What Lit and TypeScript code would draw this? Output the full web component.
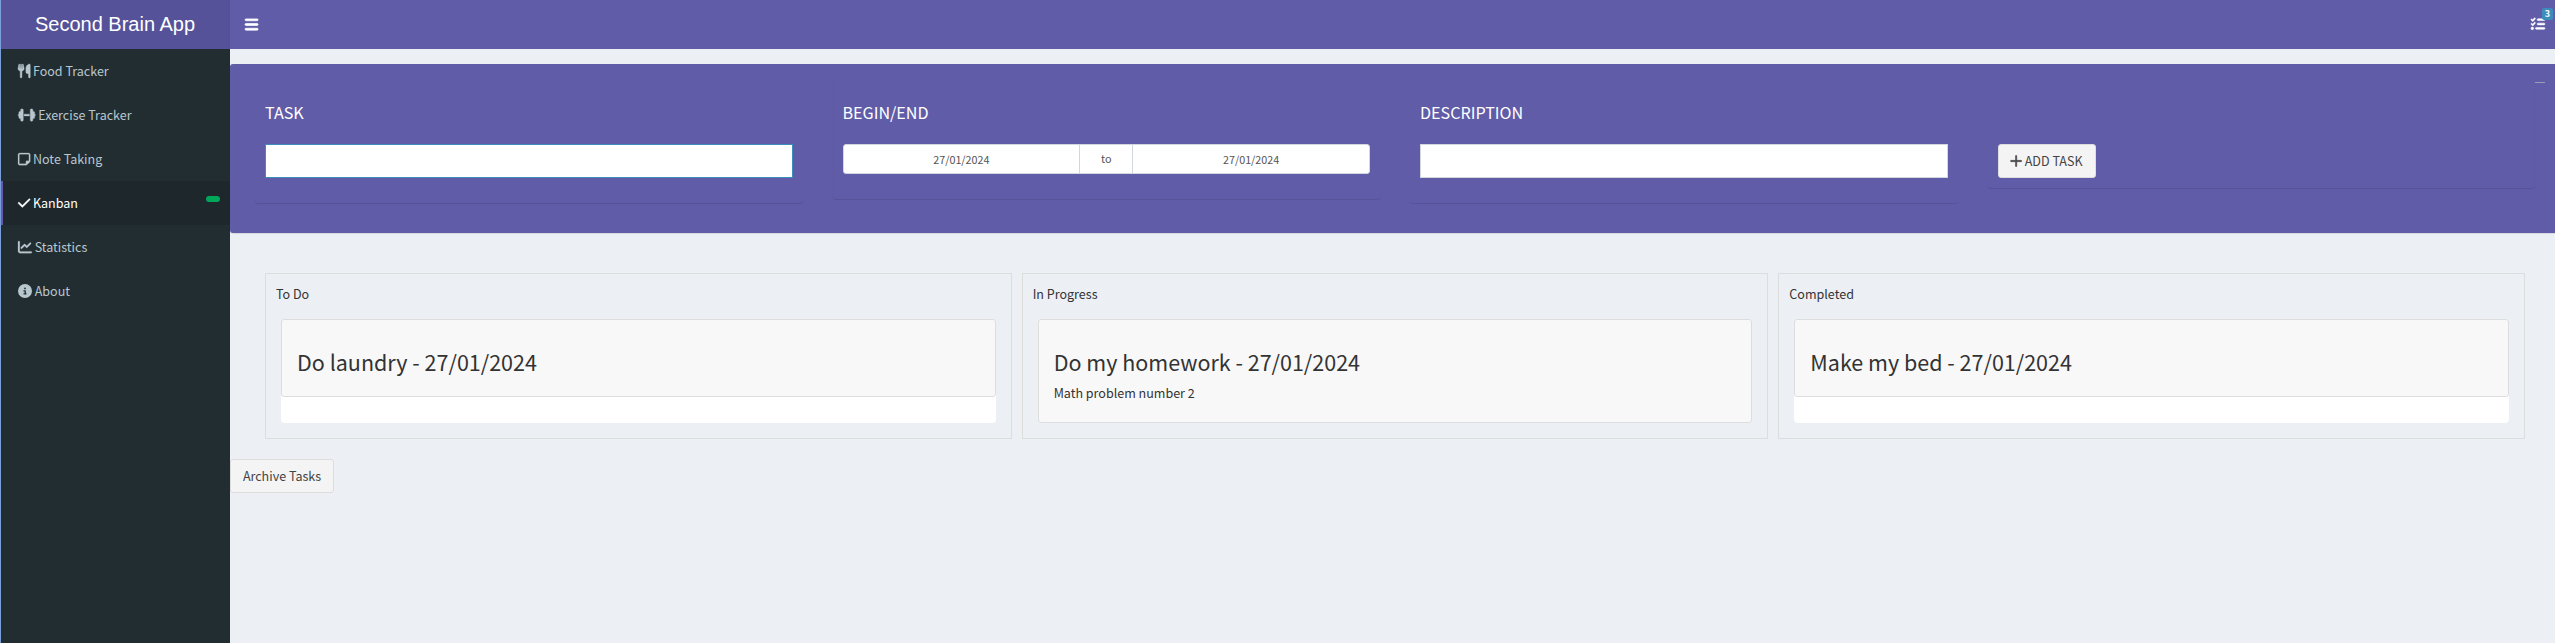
import { LitElement, html, css, svg } from "lit";
import { customElement, property } from "lit/decorators.js";

type Icon = { w: number; d: string; stroke?: number };

const ICONS: Record<string, Icon> = {
  utensils: { w: 448, stroke: 14, d: "M416 0C400 0 288 32 288 176V288c0 35.3 28.7 64 64 64h32V480c0 17.7 14.3 32 32 32s32-14.3 32-32V32c0-17.7-14.3-32-32-32zM64 16C64 7.8 57.9 1 49.7 .1S34.2 4.6 32.4 12.5L2.1 148.8C.7 155.1 0 161.5 0 167.9c0 45.9 35.1 83.6 80 87.7V480c0 17.7 14.3 32 32 32s32-14.3 32-32V255.6c44.9-4.1 80-41.8 80-87.7c0-6.4-.7-12.8-2.1-19.1L191.6 12.5c-1.8-8-9.3-13.3-17.4-12.4S160 7.8 160 16V150.2c0 5.4-4.4 9.8-9.8 9.8c-5.1 0-9.3-3.9-9.8-9L127.9 14.6C127.2 6.3 120.3 0 112 0s-15.2 6.3-15.9 14.6L83.7 151c-.5 5.1-4.7 9-9.8 9c-5.4 0-9.8-4.4-9.8-9.8V16z" },
  dumbbell: { w: 640, stroke: 14, d: "M96 64c0-17.7 14.3-32 32-32h32c17.7 0 32 14.3 32 32V448c0 17.7-14.3 32-32 32H128c-17.7 0-32-14.3-32-32V384H64c-17.7 0-32-14.3-32-32V288c-17.7 0-32-14.3-32-32s14.3-32 32-32V160c0-17.7 14.3-32 32-32H96V64zm448 0v64h32c17.7 0 32 14.3 32 32v64c17.7 0 32 14.3 32 32s-14.3 32-32 32v64c0 17.7-14.3 32-32 32H544v64c0 17.7-14.3 32-32 32H480c-17.7 0-32-14.3-32-32V64c0-17.7 14.3-32 32-32h32c17.7 0 32 14.3 32 32zM416 224v64H224V224H416z" },
  note: { w: 448, stroke: 8, d: "M64 80c-8.8 0-16 7.2-16 16V416c0 8.8 7.2 16 16 16H288V352c0-17.7 14.3-32 32-32h80V96c0-8.8-7.2-16-16-16H64zM288 480H64c-35.3 0-64-28.7-64-64V96C0 60.7 28.7 32 64 32H384c35.3 0 64 28.7 64 64V325.5c0 17-6.7 33.3-18.7 45.3l-90.5 90.5c-12 12-28.3 18.7-45.3 18.7H288z" },
  check: { w: 448, stroke: 10, d: "M438.6 105.4c12.5 12.5 12.5 32.8 0 45.3l-256 256c-12.5 12.5-32.8 12.5-45.3 0l-128-128c-12.5-12.5-12.5-32.8 0-45.3s32.8-12.5 45.3 0L160 338.7 393.4 105.4c12.5-12.5 32.8-12.5 45.3 0z" },
  chart: { w: 512, stroke: 8, d: "M64 64c0-17.7-14.3-32-32-32S0 46.3 0 64V400c0 44.2 35.8 80 80 80H480c17.7 0 32-14.3 32-32s-14.3-32-32-32H80c-8.8 0-16-7.2-16-16V64zm406.6 86.6c12.5-12.5 12.5-32.8 0-45.3s-32.8-12.5-45.3 0L320 210.7l-57.4-57.4c-12.5-12.5-32.8-12.5-45.3 0l-112 112c-12.5 12.5-12.5 32.8 0 45.3s32.8 12.5 45.3 0L240 221.3l57.4 57.4c12.5 12.5 32.8 12.5 45.3 0l128-128z" },
  info: { w: 512, d: "M256 512A256 256 0 1 0 256 0a256 256 0 1 0 0 512zM216 336h24V272H216c-13.3 0-24-10.7-24-24s10.7-24 24-24h48c13.3 0 24 10.7 24 24v88h8c13.3 0 24 10.7 24 24s-10.7 24-24 24H216c-13.3 0-24-10.7-24-24s10.7-24 24-24zm40-208a32 32 0 1 1 0 64 32 32 0 1 1 0-64z" },
  bars: { w: 448, stroke: 24, d: "M0 96C0 78.3 14.3 64 32 64H416c17.7 0 32 14.3 32 32s-14.3 32-32 32H32C14.3 128 0 113.7 0 96zM0 256c0-17.7 14.3-32 32-32H416c17.7 0 32 14.3 32 32s-14.3 32-32 32H32c-17.7 0-32-14.3-32-32zM448 416c0 17.7-14.3 32-32 32H32c-17.7 0-32-14.3-32-32s14.3-32 32-32H416c17.7 0 32 14.3 32 32z" },
  tasks: { w: 512, stroke: 20, d: "M152.1 38.2c9.9 8.9 10.7 24 1.8 33.9l-72 80c-4.4 4.9-10.6 7.8-17.2 7.9s-12.9-2.4-17.6-7L7 113c-9.3-9.4-9.3-24.6 0-34s24.6-9.4 33.9 0l22.1 22.1 55.1-61.2c8.9-9.9 24-10.7 33.9-1.8zm0 160c9.9 8.9 10.7 24 1.8 33.9l-72 80c-4.4 4.9-10.6 7.8-17.2 7.9s-12.9-2.4-17.6-7L7 273c-9.400-9.400-9.400-24.600 0-33.900s24.600-9.400 33.900 0l22.100 22.100 55.100-61.200c8.900-9.900 24-10.700 33.900-1.800zM224 96c0-17.700 14.300-32 32-32H480c17.700 0 32 14.300 32 32s-14.300 32-32 32H256c-17.700 0-32-14.300-32-32zm0 160c0-17.700 14.300-32 32-32H480c17.700 0 32 14.300 32 32s-14.300 32-32 32H256c-17.700 0-32-14.300-32-32zM160 416c0-17.700 14.300-32 32-32H480c17.700 0 32 14.300 32 32s-14.300 32-32 32H192c-17.700 0-32-14.300-32-32zM48 368a48 48 0 1 1 0 96 48 48 0 1 1 0-96z" },
  plus: { w: 448, stroke: 18, d: "M248 72c0-13.300-10.700-24-24-24s-24 10.700-24 24V232H40c-13.300 0-24 10.700-24 24s10.700 24 24 24H200V440c0 13.300 10.700 24 24 24s24-10.700 24-24V280H408c13.300 0 24-10.700 24-24s-10.700-24-24-24H248V72z" },
};

@customElement("fa-icon")
class FaIcon extends LitElement {
  @property() name = "";
  @property({ type: Number }) size = 14;
  static styles = css`
    :host { display: inline-flex; flex: none; }
    svg { display: block; fill: currentColor; stroke: currentColor; overflow: visible; }
  `;
  render() {
    const i = ICONS[this.name];
    return html`<svg width=${(this.size * i.w) / 512} height=${this.size} viewBox="0 0 ${i.w} 512">${svg`<path stroke-width=${i.stroke ?? 0} d=${i.d}></path>`}</svg>`;
  }
}

const MENU = [
  { icon: "utensils", label: "Food Tracker" },
  { icon: "dumbbell", label: "Exercise Tracker" },
  { icon: "note", label: "Note Taking" },
  { icon: "check", label: "Kanban", active: true },
  { icon: "chart", label: "Statistics" },
  { icon: "info", label: "About" },
];

const BOARD = [
  { title: "To Do", task: "Do laundry - 27/01/2024", note: "" },
  { title: "In Progress", task: "Do my homework - 27/01/2024", note: "Math problem number 2" },
  { title: "Completed", task: "Make my bed - 27/01/2024", note: "" },
];

@customElement("app-root")
class AppRoot extends LitElement {
  static styles = css`
    * { box-sizing: border-box; }
    :host {
      --fs12: 10.75px; --fs14: 12.54px; --fs18: 16.12px; --fs24: 21.5px;
      display: grid; grid-template-columns: 230px 1fr; grid-template-rows: 49px 1fr;
      width: 100%; height: 643px; overflow: hidden;
      background: #ecf0f5; color: #333;
      font-family: "Noto Sans CJK SC", "Noto Sans", sans-serif;
      font-size: var(--fs14); line-height: 20px;
    }
    .logo {
      border-left: 1px solid #7a9fdb; background: #555299; color: #fff; padding-right: 1px;
      font: 20px/48px "Liberation Sans", Arial, sans-serif; text-align: center;
    }
    .navbar {
      background: #605ca8; color: #fff; display: flex; align-items: center;
      justify-content: space-between; padding: 0 10px 1px 15px;
    }
    .tasks { position: relative; display: flex; }
    .count {
      position: absolute; left: 11px; top: -9px; width: 11px; height: 12px; border-radius: 2.5px;
      background: #3c8dbc; color: #fff; font: bold 9px/12px "Noto Sans CJK SC", sans-serif; text-align: center;
    }
    .sidebar { background: #222d32; border-left: 1px solid #7a9fdb; color: #b8c7ce; }
    .item {
      display: flex; align-items: center; gap: 2.700px; height: 44px; padding: 0 10px 0 15px;
      border-left: 2px solid transparent;
    }
    .item.active { background: #1e282c; border-left-color: #605ca8; color: #fff; }
    .pill { width: 14px; height: 6px; border-radius: 3px; background: #00a65a; margin: -8px 0 0 auto; }
    .content { padding-top: 15px; min-width: 0; }
    .box {
      height: 168.600px; padding: 9px 5px 0 10px; border-radius: 3px 0 0 3px; background: #605ca8;
      box-shadow: 0 1px 1px rgba(0,0,0,.1); position: relative;
    }
    .collapse { position: absolute; right: 10px; top: 18px; width: 10px; height: 1px; background: #97a0b3; }
    .row { display: grid; grid-template-columns: repeat(4, 577.5px); align-items: start; }
    .cell {
      margin: 0 15px; padding: 0 10px; height: 130px; border-radius: 3px;
      box-shadow: 0 1px 1px rgba(0,0,0,.1);
    }
    .cell.dates { height: 126px; }
    .cell.action { height: 115px; }
    .label { height: 71px; padding-top: 29px; color: #fff; font-size: var(--fs18); line-height: 20px; }
    .input { height: 34px; background: #fff; border: 1px solid #d2d6de; }
    .input.focus { border-color: #3c8dbc; }
    .range {
      display: grid; grid-template-columns: 1fr 54px 1fr; height: 30px; border: 1px solid #d2d6de;
      border-radius: 3px; background: #fff; color: #555; font-size: var(--fs12); line-height: 30px; text-align: center;
    }
    .to { border: solid #d2d6de; border-width: 0 1px; height: 28px; line-height: 28px; }
    .btn {
      display: inline-flex; align-items: center; justify-content: center; gap: 2px; height: 34px;
      border: 1px solid #ddd; border-radius: 3px; background: #f4f4f4; color: #444; white-space: nowrap;
    }
    .add { width: 98px; }
    .archive { width: 104px; }
    .board { display: grid; grid-template-columns: repeat(3, 1fr); gap: 10px; padding: 40px 30px 20px 35px; }
    .col { height: 166px; border: 1px solid #ddd; padding: 0 15px; }
    .head { height: 45px; padding: 10px 0 0; margin-left: -5px; }
    .list { height: 104px; border-radius: 4px; background: #fff; }
    .card { height: 78px; border: 1px solid #ddd; border-radius: 3px; background: #f8f8f8; padding: 29px 15px 0; }
    .card.full { height: 104px; }
    .title { font-size: var(--fs24); line-height: 26px; }
    .note { margin-top: 8px; }
  `;

  render() {
    return html`
      <div class="logo">Second Brain App</div>
      <div class="navbar">
        <fa-icon name="bars" size="15"></fa-icon>
        <div class="tasks"><fa-icon name="tasks"></fa-icon><span class="count">3</span></div>
      </div>
      <div class="sidebar">
        ${MENU.map((m) => html`
          <div class="item ${m.active ? "active" : ""}">
            <fa-icon name=${m.icon}></fa-icon><span>${m.label}</span>
            ${m.active ? html`<span class="pill"></span>` : ""}
          </div>`)}
      </div>
      <div class="content">
        <div class="box">
          <span class="collapse"></span>
          <div class="row">
            <div class="cell"><div class="label">TASK</div><div class="input focus"></div></div>
            <div class="cell dates"><div class="label">BEGIN/END</div>
              <div class="range"><span>27/01/2024</span><span class="to">to</span><span>27/01/2024</span></div>
            </div>
            <div class="cell"><div class="label">DESCRIPTION</div><div class="input"></div></div>
            <div class="cell action"><div class="label"></div>
              <div class="btn add"><fa-icon name="plus"></fa-icon>ADD TASK</div>
            </div>
          </div>
        </div>
        <div class="board">
          ${BOARD.map((c) => html`
            <div class="col">
              <div class="head">${c.title}</div>
              <div class="list">
                <div class="card ${c.note ? "full" : ""}">
                  <div class="title">${c.task}</div>
                  ${c.note ? html`<div class="note">${c.note}</div>` : ""}
                </div>
              </div>
            </div>`)}
        </div>
        <div class="btn archive">Archive Tasks</div>
      </div>
    `;
  }
}
